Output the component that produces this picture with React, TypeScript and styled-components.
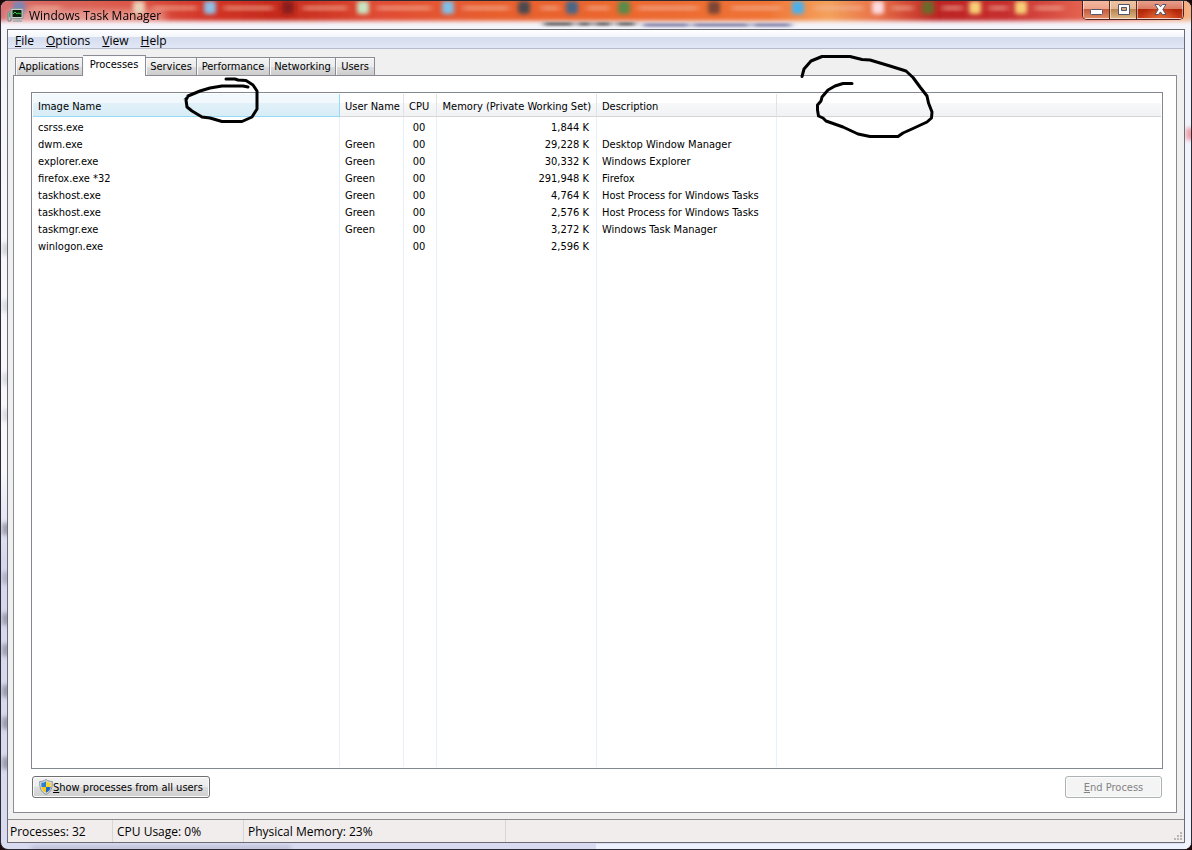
import React from "react";
import styled, { createGlobalStyle, css } from "styled-components";

const ui = `"Open Sans", "Noto Sans", sans-serif`;
const small = `"DejaVu Sans Condensed", "DejaVu Sans", sans-serif`;

const Global = createGlobalStyle`
  *, *::before, *::after { box-sizing: border-box; }
  body { margin: 0; background: #1b0808; font: 11px/17px ${small}; color: #000; }
  button { font: inherit; color: inherit; margin: 0; }
`;

const Window = styled.div`
  position: relative;
  min-height: 100vh;
  display: flex;
  flex-direction: column;
  padding: 0 6px 6px;
  border: 1px solid #2b2b33;
  border-radius: 8px;
  overflow: hidden;
  background: linear-gradient(#f4f4fb 0, #f8f8fc 55%, #d6d7ee 66%, #d9dbf0 100%);
`;

const Glass = styled.svg`
  position: absolute;
  inset: 0;
  width: 100%;
  height: 100%;
`;

const TitleBar = styled.header`
  position: relative;
  display: flex;
  align-items: center;
  height: 28px;
  padding-right: 1px;
  font: 12px/16px ${ui};
`;

const TitleText = styled.h1`
  flex: 1;
  margin: 0;
  padding: 2px 0 0 5px;
  font: inherit;
`;

const CaptionButtons = styled.div`
  display: flex;
  align-self: flex-start;
  height: 19px;
  border: 1px solid #4a2020;
  border-top: 0;
  border-radius: 0 0 5px 5px;
  overflow: hidden;
`;

const captionFill = {
  minimize: "linear-gradient(#f3b8a0 0, #eca287 50%, #c45a3c 50%, #e08a64 100%)",
  maximize: "linear-gradient(#eec4a4 0, #e4b490 50%, #b98450 50%, #dcb480 100%)",
  close:
    "radial-gradient(ellipse at 50% 110%, rgba(255, 150, 80, 0.6), transparent 60%), linear-gradient(#e8a08c 0, #d87860 50%, #b02408 50%, #c83c18 100%)",
};

const CaptionButton = styled.button<{ $kind: keyof typeof captionFill }>`
  display: grid;
  place-items: center;
  width: ${(p) => (p.$kind === "close" ? 46 : 27)}px;
  padding: 0;
  border: 1px solid rgba(255, 255, 255, 0.5);
  border-top: 0;
  background: ${(p) => captionFill[p.$kind]};
  & + & { box-shadow: -1px 0 #5b2a20; }
`;

const Client = styled.main`
  position: relative;
  flex: 1;
  display: flex;
  flex-direction: column;
  border: 1px solid #6b6b73;
  background: #f0f0f0;
`;

const MenuBar = styled.nav`
  display: flex;
  height: 19px;
  padding-left: 1px;
  border-bottom: 1px solid #b6bccc;
  background: linear-gradient(#fff 0, #f2f5fa 7px, #d5dced 7px, #e1e7f5 100%);
`;

const MenuItem = styled.button`
  padding: 2px 6px 0;
  border: 0;
  background: none;
  font: 12px/18px ${ui};
`;

const Tabs = styled.div`
  display: flex;
  align-items: flex-end;
  padding: 6px 7px 0;
`;

const Tab = styled.button<{ $width: number; $active?: boolean }>`
  width: ${(p) => p.$width}px;
  height: 18px;
  padding: 0;
  border: 1px solid #898c95;
  border-bottom: 0;
  border-left-width: 0;
  background: linear-gradient(#f3f3f3 0, #ebebeb 50%, #dddddd 50%, #cdcdcd 100%);
  box-shadow: inset 1px 1px #fafafa;
  line-height: 18px;
  white-space: nowrap;
  &:first-child { border-left-width: 1px; }
  ${(p) =>
    p.$active &&
    css`
      position: relative;
      height: 21px;
      margin-bottom: -1px;
      padding-bottom: 2px;
      background: #fff;
    `}
`;

const Panel = styled.section`
  flex: 1;
  display: flex;
  flex-direction: column;
  margin: 0 7px 6px 5px;
  padding: 16px 13px 14px 17px;
  border: 1px solid #898c95;
  background: #fff;
`;

const List = styled.div`
  flex: 1;
  display: flex;
  padding: 1px;
  border: 1px solid #828790;
`;

const Table = styled.table`
  flex: 1;
  width: 100%;
  table-layout: fixed;
  border-collapse: separate;
  border-spacing: 0;
`;

const Head = styled.th<{ $sorted?: boolean; $right?: boolean }>`
  height: 23px;
  padding: 2px 5px 0;
  border-right: 1px solid ${(p) => (p.$sorted ? "#96d9f9" : "#dfe3e8")};
  border-bottom: 1px solid ${(p) => (p.$sorted ? "#96d9f9" : "#d5d5d5")};
  background: ${(p) =>
    p.$sorted
      ? "linear-gradient(#f2f9fc 0, #f2f9fc 9px, #e1f1f9 9px, #d8ecf6 100%)"
      : "linear-gradient(#fff 0, #fff 9px, #f7f8fa 9px, #f1f2f4 100%)"};
  font-weight: normal;
  text-align: ${(p) => (p.$right ? "right" : "left")};
  white-space: nowrap;
  &:last-child { border-right: 0; }
`;

const Row = styled.tr`
  height: 17px;
  &:first-child { height: 19px; }
  &:first-child td { padding-top: 2px; }
`;

const FillerRow = styled.tr``;

const Cell = styled.td<{ $align?: "right" | "center" }>`
  padding: 0 7px 0 5px;
  border-right: 1px solid #e8f1fb;
  text-align: ${(p) => p.$align ?? "left"};
  white-space: nowrap;
  &:last-child { border-right: 0; }
`;

const Actions = styled.div`
  display: flex;
  justify-content: space-between;
  padding: 7px 1px 0;
`;

const PushButton = styled.button`
  display: flex;
  align-items: center;
  justify-content: center;
  height: 22px;
  min-width: 97px;
  padding: 0 6px;
  border: 1px solid #707070;
  border-radius: 3px;
  background: linear-gradient(#f2f2f2 0, #ebebeb 50%, #dddddd 50%, #cfcfcf 100%);
  box-shadow: inset 0 0 0 1px #fcfcfc;
  &:disabled {
    border-color: #adb2b5;
    background: #f4f4f4;
    color: #838383;
  }
`;

const StatusBar = styled.footer`
  display: flex;
  height: 23px;
  border-top: 1px solid #8d8d8d;
  background: #f1edec;
  font: 12px/23px ${ui};
`;

const Status = styled.div<{ $width: number }>`
  width: ${(p) => p.$width}px;
  padding: 0 4px 0 2px;
  border-right: 1px solid #d9d7d6;
  & + & { padding-left: 4px; }
`;

const Grip = styled.svg`
  margin: auto 1px 1px auto;
`;

const Ink = styled.svg`
  position: absolute;
  left: 0;
  top: 0;
  pointer-events: none;
`;

const processes = [
  ["csrss.exe", "", "00", "1,844 K", ""],
  ["dwm.exe", "Green", "00", "29,228 K", "Desktop Window Manager"],
  ["explorer.exe", "Green", "00", "30,332 K", "Windows Explorer"],
  ["firefox.exe *32", "Green", "00", "291,948 K", "Firefox"],
  ["taskhost.exe", "Green", "00", "4,764 K", "Host Process for Windows Tasks"],
  ["taskhost.exe", "Green", "00", "2,576 K", "Host Process for Windows Tasks"],
  ["taskmgr.exe", "Green", "00", "3,272 K", "Windows Task Manager"],
  ["winlogon.exe", "", "00", "2,596 K", ""],
];

const tabs: [string, number][] = [
  ["Applications", 68],
  ["Processes", 63],
  ["Services", 51],
  ["Performance", 73],
  ["Networking", 66],
  ["Users", 39],
];

// Bookmark bar seen through the glass: icon position and colour, then label extent.
const bookmarks: [number, string, number, number][] = [
  [18, "#7b86b8", 30, 60],
  [138, "#e9d0b8", 152, 196],
  [209, "#8fc0e6", 223, 272],
  [287, "#8a1a1c", 302, 346],
  [362, "#c9e6c4", 376, 430],
  [447, "#7fc0e8", 462, 508],
  [523, "#4a4a50", 540, 558],
  [571, "#4a6688", 586, 608],
  [623, "#5a8a4a", 637, 697],
  [713, "#7b4436", 731, 780],
  [797, "#48b0ec", 814, 862],
  [877, "#fcdce0", 891, 912],
  [927, "#6a6a2c", 941, 962],
  [974, "#f8d078", 988, 1007],
  [1020, "#f8d078", 1034, 1062],
];

// Page content blurred behind the left frame: vertical centre and strength.
const edgeMarks: [number, number][] = [
  [248, 0.25], [305, 0.2], [378, 0.2], [414, 0.2], [528, 0.6], [577, 0.35],
  [618, 0.55], [649, 0.55], [690, 0.6], [722, 0.6], [762, 0.6],
];

function GlassBackdrop() {
  return (
    <Glass aria-hidden="true">
      <defs>
        <linearGradient id="strip">
          <stop offset="0" stopColor="#d87074" />
          <stop offset="0.04" stopColor="#d86860" />
          <stop offset="0.12" stopColor="#dc5444" />
          <stop offset="0.18" stopColor="#d23426" />
          <stop offset="0.24" stopColor="#c42a1c" />
          <stop offset="0.32" stopColor="#e04c34" />
          <stop offset="0.42" stopColor="#e8602e" />
          <stop offset="0.55" stopColor="#ec6a30" />
          <stop offset="0.64" stopColor="#f07436" />
          <stop offset="0.69" stopColor="#f4a25c" />
          <stop offset="0.73" stopColor="#e87048" />
          <stop offset="0.78" stopColor="#bc2424" />
          <stop offset="0.84" stopColor="#c83030" />
          <stop offset="0.9" stopColor="#e46450" />
          <stop offset="1" stopColor="#f8bc8c" />
        </linearGradient>
        <filter id="soft" x="-20%" y="-50%" width="140%" height="200%"><feGaussianBlur stdDeviation="2" /></filter>
        <filter id="wide" filterUnits="userSpaceOnUse" x="-20" y="-20" width="2000" height="60"><feGaussianBlur stdDeviation="3 1" /></filter>
        <filter id="softer" x="-20%" y="-80%" width="140%" height="260%"><feGaussianBlur stdDeviation="4" /></filter>
      </defs>
      <rect x="-10" y="-8" width="102%" height="28" fill="url(#strip)" filter="url(#soft)" />
      <rect x="6" y="10" width="158" height="10" fill="#fff" opacity="0.45" filter="url(#softer)" />
      <g filter="url(#soft)">
        {bookmarks.map(([x, color]) => (
          <rect key={x} x={x - 6} y="0" width="12" height="13" rx="3" fill={color} />
        ))}
      </g>
      <g filter="url(#wide)">
        {bookmarks.map(([x, , from, to]) => (
          <path key={x} d={`M${from} 7H${to}`} stroke="#f4b8a0" strokeWidth="6" opacity="0.4" />
        ))}
        <path d="M543 23H572M577 23H590M594 23H610M616 23H634" stroke="#5a5a5c" strokeWidth="4" opacity="0.8" />
        <path d="M642 24H688M692 24H748M752 24H790" stroke="#7c7ca4" strokeWidth="4" opacity="0.8" />
      </g>
      <g filter="url(#soft)">
        {edgeMarks.map(([y, strength]) => (
          <rect key={y} x="1" y={y - 6} width="8" height="12" fill="#70707f" opacity={strength} />
        ))}
        <rect x="30" y="845" width="260" height="4" fill="#9a9cb8" opacity="0.5" />
      </g>
      <rect x="50%" y="843" width="50%" height="6" fill="#eef2ff" />
      <rect x="100%" y="29" width="8" height="820" transform="translate(-7 0)" fill="#f1f3fd" />
      <rect x="100%" y="127" width="8" height="12" transform="translate(-5 0)" fill="#f09aa4" filter="url(#soft)" />
    </Glass>
  );
}

const AppIcon = () => (
  <svg width="17" height="14" viewBox="0 0 17 14" aria-hidden="true">
    <path d="M1 4v9h3V4z" fill="#b9c2c4" stroke="#7b8688" />
    <path d="M2 5h1v4H2z" fill="#4ca84c" />
    <path d="M4 .5h12v10H4z" fill="#c9cfd0" stroke="#8c9698" />
    <path d="M5.500 2h9v7h-9z" fill="#0a1e0c" />
    <path d="M6 6l2-2 2 2 2-1 2 1" fill="none" stroke="#32d13c" />
    <path d="M8 11h5v1h2v2H6v-2h2z" fill="#aab2b4" />
  </svg>
);

const Shield = () => (
  <svg width="14" height="16" viewBox="0 0 14 16" aria-hidden="true">
    <path d="M7 .5C5 2 3 2.500 .7 2.500 .5 8 1.500 13 7 15.500 12.500 13 13.500 8 13.300 2.500 11 2.500 9 2 7 .5z" fill="#d8dde2" stroke="#8b949c" />
    <path d="M7 2.200C5.500 3.200 4 3.700 2.300 3.800L2.400 8H7z" fill="#2b7fd4" />
    <path d="M7 2.200c1.500 1 3 1.500 4.700 1.600L11.600 8H7z" fill="#fbd42a" />
    <path d="M2.400 8H7v5.800C4.200 12.500 2.800 10.800 2.400 8z" fill="#f7c817" />
    <path d="M11.600 8H7v5.800c2.800-1.300 4.200-3 4.600-5.800z" fill="#2269c0" />
  </svg>
);

export default function App() {
  return (
    <>
      <Global />
      <Window>
        <GlassBackdrop />
        <TitleBar>
          <AppIcon />
          <TitleText>Windows Task Manager</TitleText>
          <CaptionButtons>
            <CaptionButton aria-label="Minimize" $kind="minimize">
              <svg width="13" height="11"><rect x=".5" y="5.500" width="12" height="5" rx="1" fill="#fff" stroke="#53546a" /></svg>
            </CaptionButton>
            <CaptionButton aria-label="Maximize" $kind="maximize">
              <svg width="13" height="11">
                <path d="M1.500.5h11v10h-11z" fill="#fff" stroke="#53546a" />
                <path d="M4.500 3.500h5v3h-5z" fill="#d8a880" stroke="#53546a" />
              </svg>
            </CaptionButton>
            <CaptionButton aria-label="Close" $kind="close">
              <svg width="13" height="11" viewBox="0 0 13 11">
                <path d="M1 .5h3.500l2 2.300 2-2.300H12L8.800 5.500l3.200 5H8.500l-2-2.600-2 2.600H1l3.200-5z" fill="#fff" stroke="#53546a" />
              </svg>
            </CaptionButton>
          </CaptionButtons>
        </TitleBar>
        <Client>
          <MenuBar>
            <MenuItem><u>F</u>ile</MenuItem>
            <MenuItem><u>O</u>ptions</MenuItem>
            <MenuItem><u>V</u>iew</MenuItem>
            <MenuItem><u>H</u>elp</MenuItem>
          </MenuBar>
          <Tabs role="tablist">
            {tabs.map(([name, width]) => (
              <Tab key={name} role="tab" aria-selected={name === "Processes"} $width={width} $active={name === "Processes"}>{name}</Tab>
            ))}
          </Tabs>
          <Panel>
            <List>
              <Table>
                <colgroup>
                  <col width="307" /><col width="64" /><col width="33" /><col width="160" /><col width="180" /><col />
                </colgroup>
                <thead>
                  <tr>
                    <Head $sorted>Image Name</Head>
                    <Head>User Name</Head>
                    <Head>CPU</Head>
                    <Head $right>Memory (Private Working Set)</Head>
                    <Head>Description</Head>
                    <Head />
                  </tr>
                </thead>
                <tbody>
                  {processes.map(([name, user, cpu, memory, description], i) => (
                    <Row key={i}>
                      <Cell>{name}</Cell>
                      <Cell>{user}</Cell>
                      <Cell $align="center">{cpu}</Cell>
                      <Cell $align="right">{memory}</Cell>
                      <Cell>{description}</Cell>
                      <Cell />
                    </Row>
                  ))}
                  <FillerRow><Cell /><Cell /><Cell /><Cell /><Cell /><Cell /></FillerRow>
                </tbody>
              </Table>
            </List>
            <Actions>
              <PushButton><Shield /><span><u>S</u>how processes from all users</span></PushButton>
              <PushButton disabled><span><u>E</u>nd Process</span></PushButton>
            </Actions>
          </Panel>
          <StatusBar>
            <Status $width={105}>Processes: 32</Status>
            <Status $width={131}>CPU Usage: 0%</Status>
            <Status $width={262}>Physical Memory: 23%</Status>
            <Grip width="9" height="9" aria-hidden="true">
              <path d="M6 0h2v2H6zM3 3h2v2H3zM6 3h2v2H6zM0 6h2v2H0zM3 6h2v2H3zM6 6h2v2H6z" fill="#b9b6b5" />
            </Grip>
          </StatusBar>
        </Client>
        <Ink width="1000" height="150" viewBox="1 1 1000 150" aria-hidden="true">
          <g fill="none" stroke="#000" strokeWidth="3" strokeLinecap="round" strokeLinejoin="round">
            <path d="M226 79H235L238 80 246 80.500 253 85 257 91V109L252 117 242 121.500H222L210 118 202 117 192 111 187 107 186 100 188 96 200 91 210 88 222 86H243L248 87" />
            <path d="M184 99L187 96" stroke="#4a6474" strokeWidth="1" />
            <path d="M802 76.500L804 69 811 61 822 56.500H850L862 59.500 870 60 890 66 906 71 913 77.500 920 87 927 96 928.500 103 932 112 931.500 118 927 122 913 128.500 903 133 898 136.500H870L858 134 843 127 826 121 823 118 818.500 116 817.500 110V105L821 101 822 97 828 90 835 86 843 83.500H852" />
          </g>
        </Ink>
      </Window>
    </>
  );
}
